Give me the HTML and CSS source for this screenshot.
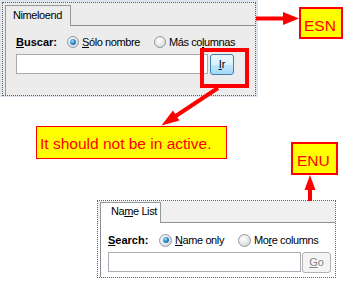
FILE: index.html
```html
<!DOCTYPE html>
<html>
<head>
<meta charset="utf-8">
<link rel="stylesheet" href="styles.css">
</head>
<body>
<div class="win win-esn">
  <div class="frame frame-esn">
    <div class="tabs">
      <div class="tab tab-esn">Nimeloend</div>
      <div class="filler"></div>
    </div>
    <div class="pane pane-esn">
      <div class="row">
        <span class="lbl"><u>B</u>uscar:</span>
        <span class="opt opt1"><span class="radio on"></span><span><u>S</u>ólo nombre</span></span>
        <span class="opt"><span class="radio"></span><span>Más co<u>l</u>umnas</span></span>
      </div>
      <div class="row2">
        <div class="input"></div>
        <div class="btn btn-ir"><u>I</u>r</div>
      </div>
    </div>
  </div>
</div>

<div class="win win-enu">
  <div class="frame frame-enu">
    <div class="tabs tabs-enu">
      <div class="tab tab-enu">Na<u>m</u>e List</div>
      <div class="filler"></div>
    </div>
    <div class="pane pane-enu">
      <div class="row">
        <span class="lbl"><u>S</u>earch:</span>
        <span class="opt opt1-enu"><span class="radio on"></span><span><u>N</u>ame only</span></span>
        <span class="opt"><span class="radio"></span><span>Mo<u>r</u>e columns</span></span>
      </div>
      <div class="row2">
        <div class="input input-enu"></div>
        <div class="btn btn-go"><u>G</u>o</div>
      </div>
    </div>
  </div>
</div>

<div class="hl"></div>
<div class="note note-esn">ESN</div>
<div class="note note-enu">ENU</div>
<div class="note note-main">It should not be in active.</div>

<svg class="arrows" width="357" height="297" viewBox="0 0 357 297">
  <line x1="256" y1="18.5" x2="285" y2="18.5" stroke="#ff0000" stroke-width="4"/>
  <polygon points="283,12 299,18.5 283,25" fill="#ff0000"/>
  <line x1="310" y1="201" x2="310" y2="188" stroke="#ff0000" stroke-width="4"/>
  <polygon points="304.5,190 310,175 315.5,190" fill="#ff0000"/>
  <line x1="218" y1="88" x2="175" y2="116.5" stroke="#ff0000" stroke-width="4"/>
  <polygon points="172.9,110.6 161.5,125.5 179.5,120.6" fill="#ff0000"/>
</svg>
</body>
</html>
```
FILE: styles.css
```css
* { box-sizing: border-box; }
html, body { margin: 0; padding: 0; }
body {
  width: 357px;
  height: 297px;
  overflow: hidden;
  position: relative;
  background: #ffffff;
  font-family: "Liberation Sans", Arial, sans-serif;
  font-size: 11px;
  color: #000;
}
u { text-decoration: underline; text-underline-offset: 1px; }

.win { position: absolute; }
.win-esn {
  left: 0; top: 0; width: 258px; height: 97px;
  background: #dde5ee;
  padding: 2px 2px 1px 2px;
}
.win-enu {
  left: 97px; top: 200px; width: 239px; height: 78px;
}
.frame {
  height: 100%;
  border: 1px dotted #5f5f5f;
  display: flex;
  flex-direction: column;
}
.frame-esn { background: #ececec; }
.frame-enu { background: #ffffff; }

.tabs { display: flex; padding: 2px 0 0 2px; height: 23px; flex: none; }
.tabs-enu { padding-top: 1px; height: 22px; background: #f0f0f0; }
.tab {
  height: 21px;
  border: 1px solid #919b9c;
  border-bottom: none;
  letter-spacing: -0.4px;
  line-height: 13px;
  white-space: nowrap;
}
.tab-esn { width: 66px; padding: 3px 0 0 7px; background: #ececec; }
.tab-enu { width: 61px; padding: 2px 0 0 10px; background: #ffffff; }
.filler { flex: 1; border-bottom: 1px solid #8e8f8f; }

.pane { flex: 1; border-left: 1px solid #919b9c; margin-left: 2px; }
.pane-esn { padding: 9px 0 0 10px; }
.pane-enu { padding: 10px 0 0 7px; border-left-color: #898c95; }

.row { display: flex; align-items: center; height: 14px; line-height: 14px; white-space: nowrap; }
.lbl { width: 51px; font-weight: bold; flex: none; }
.opt { display: flex; align-items: center; letter-spacing: -0.4px; flex: none; }
.opt1 { width: 87px; }
.opt1-enu { width: 79px; }
.radio {
  width: 12px; height: 12px; border-radius: 50%;
  border: 1px solid #8e9aa8;
  background: radial-gradient(circle at 40% 35%, #ffffff 0%, #e6e6e6 55%, #c9c9c9 100%);
  margin-right: 3px;
  position: relative;
  flex: none;
}
.pane-enu .radio { width: 13px; height: 13px; margin-right: 3px; }
.radio.on::after {
  content: "";
  position: absolute;
  left: 2px; top: 2px; width: 6px; height: 6px;
  border-radius: 50%;
  background: radial-gradient(circle at 40% 35%, #a9e1ff 0%, #2a8fd0 45%, #0d4f8a 100%);
}
.pane-enu .radio.on::after { left: 2.5px; top: 2.5px; }

.row2 { display: flex; margin-top: 5px; align-items: flex-start; }
.input { width: 192px; height: 20px; border: 1px solid #a7a9ab; background: #fff; }
.input-enu { width: 193px; border-color: #abadb3; }
.btn {
  height: 21px; border-radius: 3px;
  display: flex; align-items: center; justify-content: center;
  line-height: 13px;
}
.btn-ir {
  width: 24px; margin-left: 2px;
  border: 1px solid #3c7fb1;
  background: linear-gradient(#eaf6fd, #d9f0fc 50%, #bee6fd 51%, #a7d9f5);
  color: #000;
}
.btn-go {
  width: 29px; margin-left: 1px;
  border: 1px solid #adb2b5;
  background: #f4f4f4;
  color: #838383;
}

.hl {
  position: absolute; left: 200px; top: 48px; width: 49px; height: 40px;
  border: 4px solid #ff0000;
}
.note {
  position: absolute;
  background: #ffff00;
  border: 1px solid #ff0000;
  color: #ff0000;
  font-size: 15.5px;
  line-height: 16px;
  white-space: nowrap;
}
.note-esn { left: 299px; top: 7px; width: 44px; height: 32px; padding: 9px 0 0 3px; border-width: 2px; }
.note-enu { left: 291px; top: 142px; width: 47px; height: 33px; padding: 9px 0 0 4px; border-width: 2px; }
.note-main { left: 36px; top: 126px; width: 191px; height: 33px; padding: 9px 0 0 3px; }
.arrows { position: absolute; left: 0; top: 0; pointer-events: none; }
```
